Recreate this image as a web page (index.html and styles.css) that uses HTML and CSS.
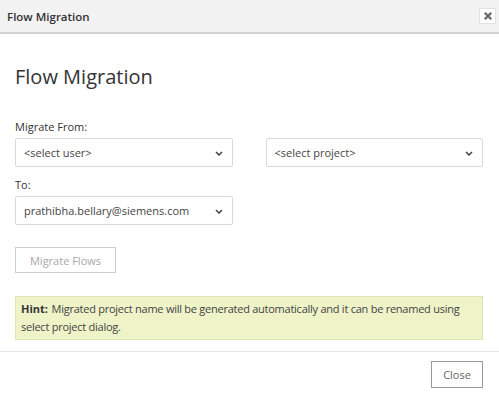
FILE: index.html
```html
<!DOCTYPE html>
<html>
<head>
<meta charset="utf-8">
<link rel="stylesheet" href="styles.css">
</head>
<body>
<div class="dialog">
  <div class="titlebar">
    <span class="title">Flow Migration</span>
    <button class="xbtn" aria-label="close"><svg width="8" height="8" viewBox="0 0 8 8"><path d="M1.5 1.5 L6.5 6.5 M6.5 1.5 L1.5 6.5" stroke="#666" stroke-width="2.2" stroke-linecap="square"/></svg></button>
  </div>
  <div class="content">
    <h1 class="heading">Flow Migration</h1>
    <div class="label lbl-from">Migrate From:</div>
    <div class="row">
      <div class="select"><span>&lt;select user&gt;</span><svg class="chev" width="8" height="5" viewBox="0 0 8 5"><path d="M1 1 L4 4 L7 1" fill="none" stroke="#444" stroke-width="1.5"/></svg></div>
      <div class="select"><span>&lt;select project&gt;</span><svg class="chev" width="8" height="5" viewBox="0 0 8 5"><path d="M1 1 L4 4 L7 1" fill="none" stroke="#444" stroke-width="1.5"/></svg></div>
    </div>
    <div class="label lbl-to">To:</div>
    <div class="row">
      <div class="select"><span>prathibha.bellary@siemens.com</span><svg class="chev" width="8" height="5" viewBox="0 0 8 5"><path d="M1 1 L4 4 L7 1" fill="none" stroke="#444" stroke-width="1.5"/></svg></div>
    </div>
    <button class="migrate" disabled>Migrate Flows</button>
    <div class="hint"><b>Hint:</b> Migrated project name will be generated automatically and it can be renamed using select project dialog.</div>
  </div>
  <div class="footer">
    <button class="close">Close</button>
  </div>
</div>
</body>
</html>
```
FILE: styles.css
```css
* { box-sizing: border-box; }
html, body { margin: 0; padding: 0; background: #fff; }
body { font-family: "Open Sans", "Noto Sans", sans-serif; color: #333; width: 499px; height: 395px; overflow: hidden; }
.dialog { display: flex; flex-direction: column; height: 395px; }
.titlebar {
  height: 34px; background: #f2f2f2; border-bottom: 2px solid #d2d2d2;
  display: flex; align-items: center; justify-content: space-between;
  padding: 0 3px 0 7px;
}
.title { font-size: 11.5px; font-weight: 600; color: #333; }
.xbtn {
  width: 17px; height: 16px; padding: 0; margin: 0; border: 1px solid #e2e2e2; background: #fff;
  display: flex; align-items: center; justify-content: center;
}
.content { padding: 0 16px 0 15px; }
.heading { margin: 30px 0 0; font-size: 20px; font-weight: 400; color: #333; line-height: 26px; }
.label { font-size: 11px; line-height: 15px; color: #333; }
.lbl-from { margin-top: 29px; }
.lbl-to { margin-top: 10px; }
.row { display: flex; gap: 33px; margin-top: 4px; }
.select {
  width: 218px; height: 29px; border: 1px solid #d9d9d9; border-radius: 2px;
  display: flex; align-items: center; justify-content: space-between;
  padding: 0 9px 0 8px; font-size: 11px; color: #444;
}
.chev { margin-top: 1px; }
.migrate {
  display: block; margin-top: 22px; width: 101px; height: 26px; border: 1px solid #cfcfcf;
  background: #fff; color: #a8a8a8; font-family: inherit; font-size: 11px; padding: 0;
}
.hint {
  margin-top: 23px; height: 44px; background: #eef3c8; border: 1px solid #dfe6b4;
  padding: 3px 5px; font-size: 11px; line-height: 18px; color: #444; letter-spacing: -0.25px;
}
.hint b { font-weight: 700; color: #333; letter-spacing: 0; margin-right: 1px; }
.footer {
  margin-top: 11px; border-top: 1px solid #e6e6e6; padding: 9px 16px 0 0;
  display: flex; justify-content: flex-end;
}
.close {
  width: 52px; height: 27px; border: 1px solid #9a9a9a; background: #fff; color: #666;
  font-family: inherit; font-size: 11px; padding: 0;
}
```
